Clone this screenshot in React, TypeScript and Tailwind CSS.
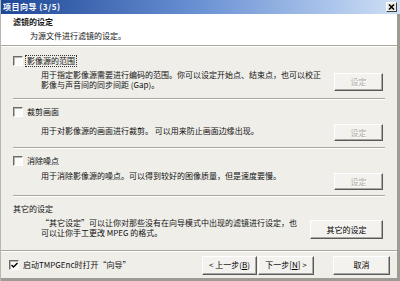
import React from "react";

const font = { fontFamily: '"Noto Sans CJK SC", "Liberation Sans", sans-serif' };

function Check({ checked = false }: { checked?: boolean }) {
  return (
    <span className="inline-flex w-[10px] h-[10px] shrink-0 items-center justify-center bg-[#fbfbf9] border-t border-l border-t-[#6a6a6a] border-l-[#6a6a6a] border-b border-r border-b-white border-r-white shadow-[inset_1px_1px_0_#b8b6ae]">
      {checked && (
        <svg width="7" height="7" viewBox="0 0 7 7">
          <path d="M0.5 3 L2.5 5 L6.5 1" stroke="#000" strokeWidth="1.4" fill="none" />
        </svg>
      )}
    </span>
  );
}

function Btn({
  children,
  disabled = false,
  className = "",
}: {
  children: React.ReactNode;
  disabled?: boolean;
  className?: string;
}) {
  return (
    <div
      className={
        "flex items-center justify-center bg-[#f3f2ee] border border-t-white border-l-white border-r-[#5a5a5a] border-b-[#5a5a5a] shadow-[inset_-1px_-1px_0_#a9a9a3] text-[8px] leading-none " +
        (disabled ? "text-[#aeaca4] [text-shadow:1px_1px_0_#fff] " : "text-black ") +
        className
      }
    >
      {children}
    </div>
  );
}

function Sep() {
  return <div className="mx-[12px] h-[2px] border-t border-t-[#aca899] border-b border-b-white" />;
}

export default function App() {
  return (
    <div
      style={font}
      className="w-[400px] h-[281px] overflow-hidden flex flex-col bg-[#efeee9] text-[#111] border-l border-l-[#b8b6ae]"
    >
      {/* Title bar */}
      <div className="h-[14px] shrink-0 flex items-center justify-between bg-gradient-to-r from-[#1e4796] via-[#6b92d4] to-[#cfe0f5] pl-[2px] pr-[3px]">
        <span className="text-white font-bold text-[8px] leading-none tracking-[0.5px]">项目向导 (3/5)</span>
        <div className="w-[11px] h-[10px] flex items-center justify-center bg-[#eceae3] border border-t-white border-l-white border-r-[#404040] border-b-[#404040]">
          <svg width="7" height="6" viewBox="0 0 7 6">
            <path d="M1 0.5 L6 5.5 M6 0.5 L1 5.5" stroke="#000" strokeWidth="1.5" />
          </svg>
        </div>
      </div>

      <div className="flex-1 flex flex-col border-r-[3px] border-r-[#9d9b94] border-b-[3px] border-b-[#9d9b94]">
        {/* Header */}
        <div className="h-[32px] shrink-0 bg-white border-b border-b-[#aca899] pt-[3px]">
          <div className="pl-[12px] text-[8px] font-bold leading-[10px]">滤镜的设定</div>
          <div className="pl-[29px] mt-[4px] text-[8px] leading-[10px]">为源文件进行滤镜的设定。</div>
        </div>
        <div className="h-px bg-white" />

        {/* Section 1 */}
        <div className="h-[51px] shrink-0 pl-[12px] pr-[12px] pt-[8px]">
          <div className="flex items-center h-[12px] gap-[3px]">
            <Check />
            <span className="text-[8px] leading-[10px] px-[1px] outline outline-1 outline-dotted outline-[#333]">影像源的范围</span>
          </div>
          <div className="flex items-start mt-[3px]">
            <div className="ml-[28px] flex-1 text-[8px] leading-[10px]">
              <div className="whitespace-nowrap">用于指定影像源需要进行编码的范围。你可以设定开始点、结束点，也可以校正</div>
              <div className="whitespace-nowrap">影像与声音间的同步间距 (Gap)。</div>
            </div>
            <Btn disabled className="w-[49px] h-[18px] mt-[3px] mr-[2px]">设定</Btn>
          </div>
        </div>
        <Sep />

        {/* Section 2 */}
        <div className="h-[47px] shrink-0 pl-[12px] pr-[12px] pt-[6px]">
          <div className="flex items-center h-[12px] gap-[4px]">
            <Check />
            <span className="text-[8px] leading-[10px]">裁剪画面</span>
          </div>
          <div className="flex items-start mt-[3px]">
            <div className="ml-[28px] flex-1 text-[8px] leading-[10px] pt-[5px]">
              <div className="whitespace-nowrap">用于对影像源的画面进行裁剪。 可以用来防止画面边缘出现。</div>
            </div>
            <Btn disabled className="w-[49px] h-[17px] mt-[3px] mr-[2px]">设定</Btn>
          </div>
        </div>
        <Sep />

        {/* Section 3 */}
        <div className="h-[46px] shrink-0 pl-[12px] pr-[12px] pt-[6px]">
          <div className="flex items-center h-[12px] gap-[4px]">
            <Check />
            <span className="text-[8px] leading-[10px]">消除噪点</span>
          </div>
          <div className="flex items-start mt-[4px]">
            <div className="ml-[28px] flex-1 text-[8px] leading-[10px]">
              <div className="whitespace-nowrap">用于消除影像源的噪点。可以得到较好的图像质量，但是速度要慢。</div>
            </div>
            <Btn disabled className="w-[49px] h-[17px] mt-[2px] mr-[2px]">设定</Btn>
          </div>
        </div>
        <Sep />

        {/* Section 4 */}
        <div className="h-[53px] shrink-0 pl-[12px] pr-[12px] pt-[7px]">
          <div className="text-[8px] leading-[10px]">其它的设定</div>
          <div className="flex items-start mt-[4px]">
            <div className="ml-[28px] flex-1 text-[8px] leading-[10px]">
              <div className="whitespace-nowrap">“其它设定”可以让你对那些没有在向导模式中出现的滤镜进行设定，也</div>
              <div className="whitespace-nowrap">可以让你手工更改 MPEG 的格式。</div>
            </div>
            <Btn className="w-[73px] h-[19px] mt-[2px] mr-[2px]">其它的设定</Btn>
          </div>
        </div>
        <div className="h-[2px] border-t border-t-[#aca899] border-b border-b-white" />

        {/* Bottom bar */}
        <div className="flex-1 flex items-center pl-[8px] pr-[7px]">
          <div className="flex items-center gap-[4px]">
            <Check checked />
            <span className="text-[8px] leading-[10px] whitespace-nowrap">启动TMPGEnc时打开“向导”</span>
          </div>
          <div className="flex-1" />
          <Btn className="w-[55px] h-[19px]">&lt; 上一步(<span className="underline">B</span>)</Btn>
          <Btn className="w-[56px] h-[19px] ml-[1px]">下一步[<span className="underline">N</span>] &gt;</Btn>
          <Btn className="w-[57px] h-[19px] ml-[19px]">取消</Btn>
        </div>
      </div>
    </div>
  );
}
